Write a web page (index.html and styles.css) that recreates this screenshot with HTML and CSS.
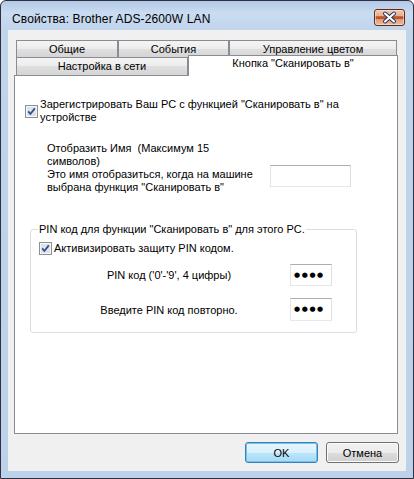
FILE: index.html
```html
<!DOCTYPE html>
<html lang="ru">
<head>
<meta charset="utf-8">
<title>Свойства: Brother ADS-2600W LAN</title>
<link rel="stylesheet" href="styles.css">
</head>
<body>
<div class="window">
  <div class="titlebar">
    <span class="title">Свойства: Brother ADS-2600W LAN</span>
    <div class="close">
      <svg width="29" height="15" viewBox="0 0 29 15">
        <path d="M10 3.5 L19 11.5 M19 3.5 L10 11.5" stroke="#24346a" stroke-width="4" stroke-linecap="round" fill="none"/>
        <path d="M10 3.5 L19 11.5 M19 3.5 L10 11.5" stroke="#ffffff" stroke-width="2" stroke-linecap="round" fill="none"/>
      </svg>
    </div>
  </div>
  <div class="client">
    <div class="tabs">
      <div class="tabrow row1">
        <div class="tab t-general">Общие</div>
        <div class="tab t-events">События</div>
        <div class="tab t-color">Управление цветом</div>
      </div>
      <div class="tabrow row2">
        <div class="tab t-net">Настройка в сети</div>
        <div class="tab t-scan">Кнопка "Сканировать в"</div>
      </div>
    </div>
    <div class="panel">
      <div class="check-row reg">
        <svg class="cb" width="13" height="13" viewBox="0 0 13 13">
          <rect x="0.5" y="0.5" width="12" height="12" fill="#f6f6f6" stroke="#8e8f8f"/>
          <rect x="2" y="2" width="9" height="9" fill="#dde3ea"/>
          <path d="M3.2 6.4 L5.4 9 L9.8 3.4" fill="none" stroke="#2c4a8e" stroke-width="1.7"/>
        </svg>
        <span class="cb-label">Зарегистрировать Ваш PC с функцией "Сканировать в" на<br>устройстве</span>
      </div>
      <div class="name-row">
        <div class="name-labels">
          <div>Отобразить Имя&nbsp; (Максимум 15<br>символов)</div>
          <div>Это имя отобразиться, когда на машине<br>выбрана функция "Сканировать в"</div>
        </div>
        <div class="textbox name-box"></div>
      </div>
      <fieldset class="group">
        <legend>PIN код для функции "Сканировать в" для этого PC.</legend>
        <div class="check-row pin-check">
          <svg class="cb" width="13" height="13" viewBox="0 0 13 13">
            <rect x="0.5" y="0.5" width="12" height="12" fill="#f6f6f6" stroke="#8e8f8f"/>
            <rect x="2" y="2" width="9" height="9" fill="#dde3ea"/>
            <path d="M3.2 6.4 L5.4 9 L9.8 3.4" fill="none" stroke="#2c4a8e" stroke-width="1.7"/>
          </svg>
          <span class="cb-label">Активизировать защиту PIN кодом.</span>
        </div>
        <div class="pin-row first">
          <span class="pin-label">PIN код ('0'-'9', 4 цифры)</span>
          <div class="textbox pin-box">●●●●</div>
        </div>
        <div class="pin-row second">
          <span class="pin-label">Введите PIN код повторно.</span>
          <div class="textbox pin-box">●●●●</div>
        </div>
      </fieldset>
    </div>
    <div class="buttons">
      <button class="btn default">OK</button>
      <button class="btn">Отмена</button>
    </div>
  </div>
</div>
</body>
</html>
```

FILE: styles.css
```css
* { box-sizing: border-box; }

body {
  margin: 0;
  font-family: "Liberation Sans", Arial, sans-serif;
  font-size: 11px;
  color: #000;
}

.window {
  width: 414px;
  height: 479px;
  border: 1px solid #2f2f3f;
  border-radius: 6px 6px 0 0;
  background: linear-gradient(#b2c9e6 0, #cadcf1 12px, #c0d4ec 29px, #bcd1ea 100%);
  padding: 0 7px 7px;
  display: flex;
  flex-direction: column;
}

.titlebar {
  height: 29px;
  display: flex;
  align-items: flex-start;
  justify-content: space-between;
}

.title {
  font-size: 12px;
  line-height: 15px;
  letter-spacing: 0.12px;
  margin: 11px 0 0 4px;
  white-space: nowrap;
}

.close {
  width: 31px;
  height: 17px;
  margin: 8px 1px 0 0;
  border: 1px solid #5b2b22;
  border-radius: 3px;
  background: linear-gradient(#f1cbb0 0%, #e6ae8c 40%, #c05a31 44%, #b8532c 58%, #de9b76 62%, #ecbd9c 100%);
  box-shadow: inset 0 0 0 1px rgba(255, 230, 210, 0.6);
}

.close svg { display: block; }

.client {
  flex: 1;
  background: #f0f0f0;
  padding-top: 10px;
}

.tabs { margin-left: 8px; }

.tabrow { display: flex; }

.tab {
  border: 1px solid #898c95;
  border-bottom: none;
  background: linear-gradient(#f4f4f4, #ececec 50%, #dfdfdf 50%, #d5d5d5);
  text-align: center;
  white-space: nowrap;
}

.row1 { height: 17px; }
.row1 .tab { height: 17px; line-height: 16px; }

.t-general { width: 102px; }
.t-events { width: 111px; }
.t-color { width: 168px; }

.row2 {
  height: 18px;
  position: relative;
  z-index: 1;
}
.row2 .tab { height: 18px; line-height: 17px; }

.t-net { width: 172px; }

.row2 .t-scan {
  width: 210px;
  height: 21px;
  margin-top: -2px;
  background: #fff;
  line-height: 13px;
  padding-top: 1px;
}

.panel {
  margin-left: 6px;
  width: 384px;
  height: 359px;
  border: 1px solid #898c95;
  background: #fff;
}

.check-row {
  display: flex;
  align-items: center;
}

.cb { flex: none; display: block; }

.cb-label {
  line-height: 13px;
  margin-left: 2px;
  white-space: nowrap;
}

.reg { margin: 22px 0 0 10px; }

.name-row {
  display: flex;
  margin: 18px 0 0 32px;
}

.name-labels {
  width: 223px;
  line-height: 13px;
  white-space: nowrap;
}

.textbox {
  border: 1px solid;
  border-color: #abadb3 #dbdfe6 #e3e9ef #e2e3ea;
  background: #fff;
}

.name-box {
  width: 81px;
  height: 22px;
  margin-top: 23px;
}

.group {
  margin: 29px 0 0 15px;
  width: 327px;
  min-width: 0;
  border: 1px solid #d5dfe5;
  border-radius: 3px;
  padding: 0 0 11px 7px;
}

.group legend {
  padding: 0 1px;
  line-height: 13px;
}

.pin-check { margin: 6px 0 0 1px; }

.pin-row {
  display: flex;
  align-items: center;
  margin-left: 10px;
}

.pin-row.first { margin-top: 9px; }
.pin-row.second { margin-top: 12px; }

.pin-label {
  width: 242px;
  text-align: center;
  white-space: nowrap;
}

.pin-box {
  width: 42px;
  height: 22px;
  font-family: "DejaVu Sans", sans-serif;
  font-size: 7px;
  line-height: 20px;
  letter-spacing: 1.6px;
  padding-left: 3px;
}

.pin-row.second .pin-box { height: 23px; line-height: 21px; }

.buttons {
  display: flex;
  justify-content: flex-end;
  gap: 8px;
  margin: 8px 7px 0 0;
}

.btn {
  width: 73px;
  height: 21px;
  padding: 0;
  border: 1px solid #707070;
  border-radius: 3px;
  background: linear-gradient(#f2f2f2, #ebebeb 50%, #dddddd 50%, #cfcfcf);
  box-shadow: inset 0 0 0 1px #fbfbfb;
  font-family: "Liberation Sans", Arial, sans-serif;
  font-size: 11px;
  color: #000;
}

.btn.default {
  border-color: #3c7fb1;
  background: linear-gradient(#eaf6fd, #d9f0fc 50%, #bee6fd 50%, #a7d9f5);
  box-shadow: inset 0 0 0 1px #6cc6f0;
}
```
